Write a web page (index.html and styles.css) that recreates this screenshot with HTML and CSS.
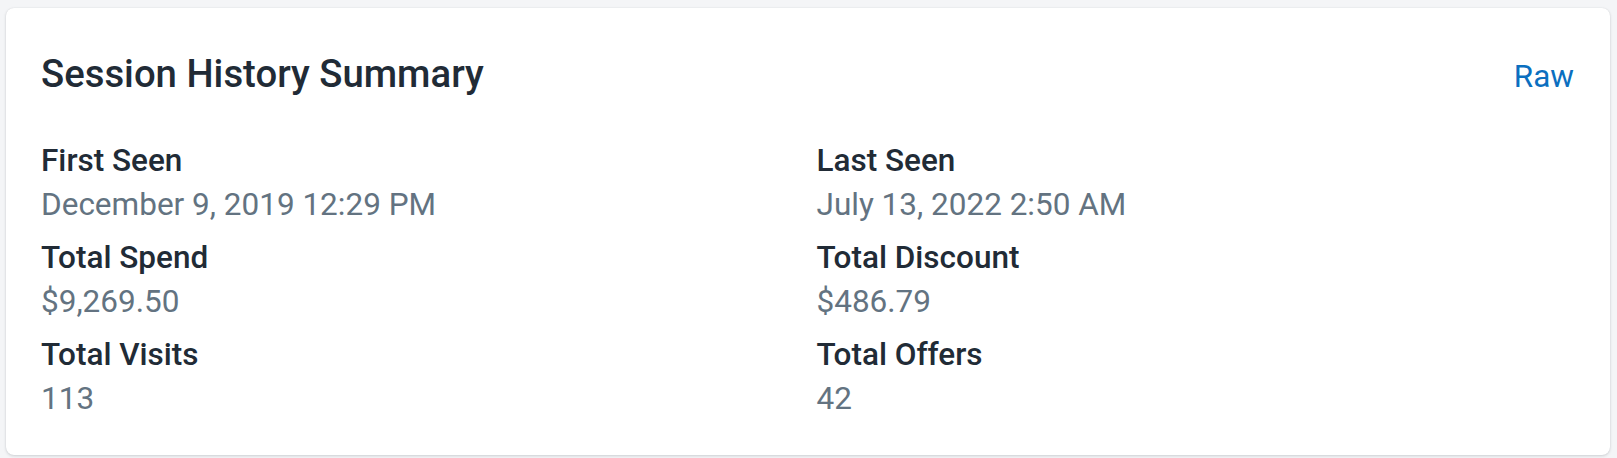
FILE: index.html
```html
<!DOCTYPE html>
<html lang="en">
<head>
<meta charset="utf-8">
<title>Session History Summary</title>
<link rel="stylesheet" href="styles.css">
</head>
<body>
  <section class="card">
    <header class="card-header">
      <h2 class="card-title">Session History Summary</h2>
      <a class="raw-link" href="#">Raw</a>
    </header>
    <dl class="summary">
      <div class="item">
        <dt class="label">First Seen</dt>
        <dd class="value">December 9, 2019 12:29 PM</dd>
      </div>
      <div class="item">
        <dt class="label">Last Seen</dt>
        <dd class="value">July 13, 2022 2:50 AM</dd>
      </div>
      <div class="item">
        <dt class="label">Total Spend</dt>
        <dd class="value">$9,269.50</dd>
      </div>
      <div class="item">
        <dt class="label">Total Discount</dt>
        <dd class="value">$486.79</dd>
      </div>
      <div class="item">
        <dt class="label">Total Visits</dt>
        <dd class="value">113</dd>
      </div>
      <div class="item">
        <dt class="label">Total Offers</dt>
        <dd class="value">42</dd>
      </div>
    </dl>
  </section>
</body>
</html>
```

FILE: styles.css
```css
html, body {
  margin: 0;
  padding: 0;
}

body {
  background: #f4f5f7;
  padding: 8px 7px 6px 6px;
  font-family: Roboto, "Liberation Sans", Arial, sans-serif;
  color: #212b36;
}

.card {
  background: #ffffff;
  border-radius: 8px;
  box-shadow: 0 1px 3px rgba(33, 43, 54, 0.18), 0 0 1px rgba(33, 43, 54, 0.12);
  padding: 44px 36px 34px 35px;
}

.card-header {
  display: flex;
  justify-content: space-between;
  align-items: baseline;
  margin-bottom: 40px;
}

.card-title {
  margin: 0;
  font-size: 38.3px;
  line-height: 44px;
  font-weight: 500;
  color: #212b36;
}

.raw-link {
  font-size: 31.5px;
  line-height: 44px;
  color: #0b6fc0;
  text-decoration: none;
}

.summary {
  margin: 0;
  display: grid;
  grid-template-columns: 1fr 1fr;
  column-gap: 18px;
  row-gap: 9px;
}

.item {
  display: flex;
  flex-direction: column;
}

.label {
  font-size: 31.5px;
  line-height: 44px;
  font-weight: 500;
  color: #212b36;
}

.value {
  margin: 0;
  font-size: 31.5px;
  line-height: 44px;
  color: #637381;
}
```
